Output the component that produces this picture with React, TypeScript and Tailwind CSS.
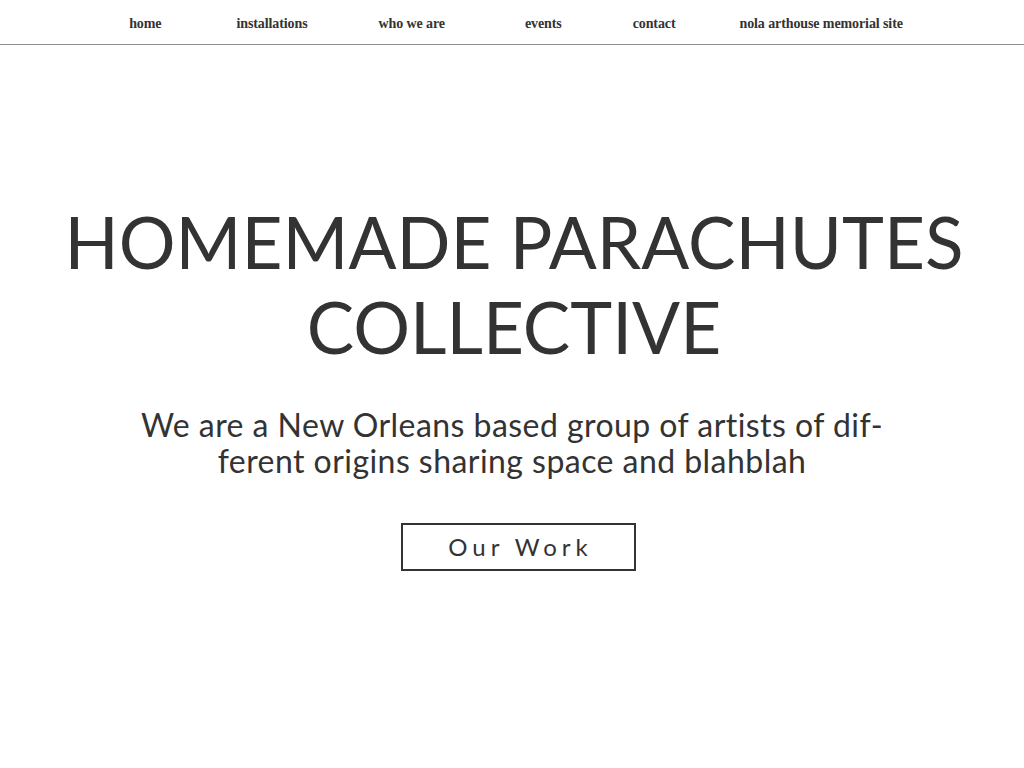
export default function App() {
  return (
    <div className="min-h-screen bg-white text-[#333]">
      <nav className="flex h-[45px] items-center justify-center border-b border-[#8f8f8f] pt-[3px] font-['Liberation_Serif',serif] text-[14px] font-bold tracking-[-0.1px]">
        <a className="ml-[8px]">home</a>
        <a className="ml-[75px]">installations</a>
        <a className="ml-[71px]">who we are</a>
        <a className="ml-[80px]">events</a>
        <a className="ml-[71px]">contact</a>
        <a className="ml-[64px]">nola arthouse memorial site</a>
      </nav>
      <section className="flex flex-col items-center pt-[154px] font-['Lato',sans-serif]">
        <h1 className="ml-[4px] whitespace-nowrap text-center text-[71px] leading-[85px] font-normal">
          HOMEMADE PARACHUTES
          <br />
          COLLECTIVE
        </h1>
        <p className="mt-[38px] whitespace-nowrap text-center text-[32px] leading-[36px] tracking-[0.45px]">
          We are a New Orleans based group of artists of dif-
          <br />
          ferent origins sharing space and blahblah
        </p>
        <button className="ml-[12px] mt-[44px] flex h-[48px] w-[235px] items-center justify-center border-2 border-[#333] pl-[5px] text-[24px] tracking-[5px]">
          Our Work
        </button>
      </section>
    </div>
  );
}
